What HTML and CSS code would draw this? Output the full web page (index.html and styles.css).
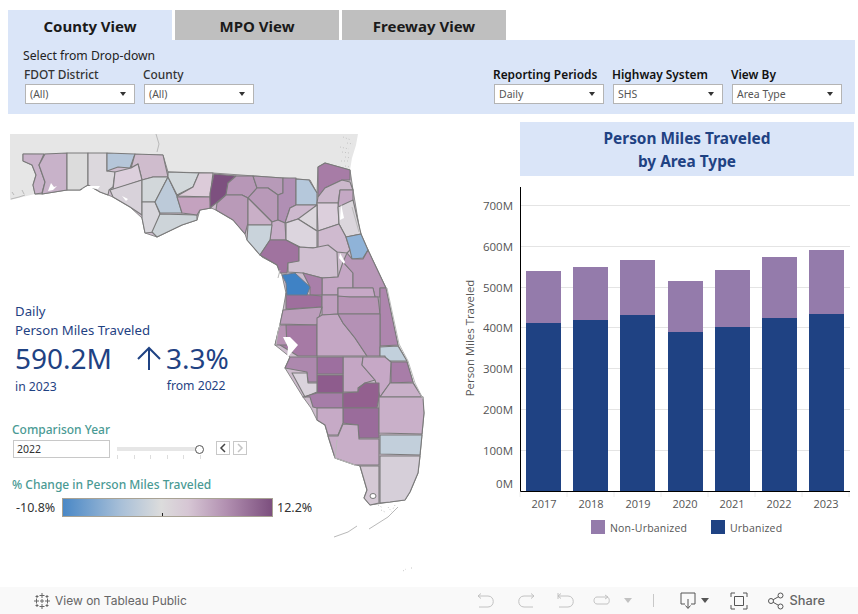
FILE: index.html
```html
<!DOCTYPE html>
<html lang="en">
<head>
<meta charset="utf-8">
<title>Person Miles Traveled</title>
<link rel="stylesheet" href="styles.css">
</head>
<body>
<div class="dashboard">
  <nav class="tabs">
    <a class="tab active">County View</a>
    <a class="tab">MPO View</a>
    <a class="tab">Freeway View</a>
  </nav>
  <section class="filters">
    <div class="filters-left">
      <div class="hint">Select from Drop-down</div>
      <div class="filter-row">
        <div class="filter"><label>FDOT District</label><div class="select"><span>(All)</span><i class="caret"></i></div></div>
        <div class="filter"><label>County</label><div class="select"><span>(All)</span><i class="caret"></i></div></div>
      </div>
    </div>
    <div class="filter-row">
      <div class="filter"><label class="strong">Reporting Periods</label><div class="select"><span>Daily</span><i class="caret"></i></div></div>
      <div class="filter"><label class="strong">Highway System</label><div class="select"><span>SHS</span><i class="caret"></i></div></div>
      <div class="filter"><label class="strong">View By</label><div class="select"><span>Area Type</span><i class="caret"></i></div></div>
    </div>
  </section>
  <main class="content">
    <div class="left">
      <svg class="map" width="500" height="473" viewBox="0 114 500 473">
        <polygon fill="#e6e6e6" points="10,134 358,134 356,145 352,158 350,170 325,163 318,167 317,192 309,180 213,173 168,172 163,155 135,154 23,153 23,161 32,165 36,175 33,185 35,194 10,200"/>
        <path class="speck" d="M156,134l3,10l-2,8M11,199l8,-2l6,-2M12,192l2,3M22,190l2,4"/>
        <path class="noise" d="M343,137l8,3M347,143l6,1M340,147l9,2M342,152l7,1M345,157l6,1M341,161l8,0M345,166l5,1"/>
        <polygon class="state" points="23,154 163,155 168,172 213,173 310,180 317,193 318,167 325,163 350,170 353,190 360,232 368,250 386,288 398,345 407,361 413,382 422,397 424,413 422,434 420,456 418,473 410,492 405,500 390,502 370,505 364,498 367,490 360,466 335,458 328,436 325,425 317,420 311,408 303,397 285,368 290,357 275,345 280,325 283,310 286,293 282,275 277,265 262,257 247,240 245,234 233,220 216,210 211,208 200,210 197,220 182,225 157,237 145,233 142,218 130,207 113,197 108,195 100,192 88,185 80,190 67,190 42,194 35,194 33,185 36,175 32,165 23,161"/>
        <g class="counties">
          <polygon fill="#c9b3ca" points="23,154 44,154 39,165 45,182 42,193 35,194 33,185 36,175 32,165 23,161"/>
          <polygon fill="#c8b2c9" points="45,154 67,153 67,190 42,194 45,182 39,165"/>
          <polygon fill="#dcdcdc" points="67,153 88,153 88,185 80,190 67,190"/>
          <polygon fill="#dcd8dd" points="88,153 107,153 107,171 115,172 113,187 109,190 108,195 100,192 88,185"/>
          <polygon fill="#b5c6d9" points="107,153 135,154 130,168 118,167 107,171"/>
          <polygon fill="#cfbccd" points="135,154 163,155 168,177 153,177 142,180 138,164 131,168"/>
          <polygon fill="#dccfdc" points="115,172 131,168 138,164 142,180 113,190"/>
          <polygon fill="#d8d2da" points="110,190 142,180 142,215 130,207 113,197"/>
          <polygon fill="#d2d7da" points="142,180 153,177 168,177 155,202 142,202"/>
          <polygon fill="#d8d6dc" points="142,202 155,202 160,214 155,232 145,233 142,218"/>
          <polygon fill="#bccad9" points="168,177 177,196 182,213 160,213 155,202"/>
          <polygon fill="#cdd4d9" points="160,214 197,215 197,220 182,225 157,237 152,232"/>
          <polygon fill="#d2d8db" points="168,172 199,173 193,187 177,195 168,177"/>
          <polygon fill="#dccbd9" points="199,173 213,173 210,197 177,196 193,187"/>
          <polygon fill="#c4a2bf" points="177,197 210,197 211,208 200,210 197,215 182,213"/>
          <polygon fill="#7d507f" points="214,174 236,176 228,183 226,195 210,208 210,193"/>
          <polygon fill="#b797b7" points="236,176 253,176 257,188 248,198 242,195 226,195 228,183"/>
          <polygon fill="#b99ab8" points="226,195 242,195 248,198 248,223 245,234 233,220 216,210 217,203"/>
          <polygon fill="#b79ab8" points="253,176 283,178 283,193 278,195 268,188 257,188"/>
          <polygon fill="#b899b8" points="257,188 268,188 278,195 278,220 272,222 255,205 248,198"/>
          <polygon fill="#c9afc7" points="248,198 255,205 272,222 272,225 248,225"/>
          <polygon fill="#b08fb4" points="283,178 296,178 296,205 290,208 285,223 278,220 278,195 283,193"/>
          <polygon fill="#b5c8db" points="296,179 309,180 317,193 317,205 296,205"/>
          <polygon fill="#a77ca6" points="318,167 325,163 350,170 350,180 342,180 325,188 318,197"/>
          <polygon fill="#ccb8cc" points="325,188 342,180 350,182 353,190 340,190 338,203 317,203 318,197"/>
          <polygon fill="#c4a8c4" points="340,190 353,190 353,207 338,207"/>
          <polygon fill="#dccfdc" points="317,203 338,203 339,224 318,231"/>
          <polygon fill="#dbd6dc" points="338,207 353,200 361,234 346,237 339,224"/>
          <polygon fill="#cdb9ce" points="290,208 296,205 317,205 302,219 298,219 285,223"/>
          <polygon fill="#dcd7dd" points="298,219 317,205 317,231"/>
          <polygon fill="#c8aec8" points="278,220 285,223 286,240 270,240 272,222"/>
          <polygon fill="#c9d3db" points="248,225 272,225 270,240 260,255 247,240"/>
          <polygon fill="#dcd5de" points="286,223 298,219 317,231 317,248 300,247 286,240"/>
          <polygon fill="#cfbacf" points="318,231 339,224 346,237 350,250 347,253 337,252 318,248"/>
          <polygon fill="#8fb3d8" points="346,237 361,234 368,250 363,258 352,259 350,250"/>
          <polygon fill="#a0739f" points="270,240 286,240 299,247 299,262 288,263 287,273 280,273 277,265 260,255"/>
          <polygon fill="#d0c0d1" points="299,247 313,248 328,245 337,252 338,277 322,278 303,273 288,272 288,263 299,261"/>
          <polygon fill="#c4a6c4" points="322,278 338,277 343,262 353,273 353,288 338,288 338,295 322,295"/>
          <polygon fill="#b897b8" points="347,253 352,259 363,259 368,250 386,288 380,288 380,297 375,297 373,288 353,288 353,273 343,262"/>
          <polygon fill="#a97fa9" points="303,273 322,278 322,295 310,295 310,287"/>
          <polygon fill="#9f6f9d" points="286,293 310,295 322,296 322,307 286,309"/>
          <polygon fill="#bf9fbf" points="322,295 338,295 338,314 322,315"/>
          <polygon fill="#c6a8c6" points="338,288 373,288 375,297 338,297"/>
          <polygon fill="#b794b6" points="338,296 350,297 378,297 380,314 338,314"/>
          <polygon fill="#ae86ae" points="380,288 386,288 398,345 380,346 380,315"/>
          <polygon fill="#bb9dbb" points="283,310 322,307 317,325 280,324"/>
          <polygon fill="#a67aa5" points="286,325 317,325 317,356 298,356 280,345"/>
          <polygon fill="#b793b4" points="280,325 286,325 287,345 275,345 278,332"/>
          <polygon fill="#c4a7c4" points="317,318 322,315 338,314 343,323 355,338 367,356 317,356"/>
          <polygon fill="#b491b5" points="338,314 380,314 380,356 367,356 355,338 343,323"/>
          <polygon fill="#c2d0dc" points="380,347 398,346 407,361 385,361 385,356 380,356"/>
          <polygon fill="#a87da8" points="391,362 407,362 413,382 391,383"/>
          <polygon fill="#c4a6c4" points="343,357 363,357 362,365 375,380 365,383 358,388 358,392 343,392"/>
          <polygon fill="#c6a8c6" points="363,357 385,357 391,362 390,383 380,397 375,380 362,365"/>
          <polygon fill="#9d6f9f" points="317,357 343,357 343,374 317,374"/>
          <polygon fill="#8e5c8d" points="317,375 343,375 343,393 317,393"/>
          <polygon fill="#ad88ae" points="290,357 317,357 317,382 308,382 307,372 285,368"/>
          <polygon fill="#dad3dc" points="292,373 307,373 308,383 317,383 317,392 305,397"/>
          <polygon fill="#a67da8" points="303,397 317,393 343,393 343,408 317,408 313,407 310,397"/>
          <polygon fill="#93608f" points="343,393 358,392 359,388 365,383 379,383 379,397 377,408 343,408"/>
          <polygon fill="#9a6c9b" points="343,408 377,408 379,408 379,438 359,438 358,425 343,423"/>
          <polygon fill="#c6aac6" points="317,408 343,408 343,423 338,435 328,435 325,425 317,420"/>
          <polygon fill="#c9b0c9" points="390,383 413,383 422,397 380,397"/>
          <polygon fill="#c9b0c9" points="379,397 423,397 424,413 422,434 379,433"/>
          <polygon fill="#c2cfdb" points="380,435 422,435 420,455 380,454"/>
          <polygon fill="#d6cfd9" points="380,456 420,456 418,473 410,492 405,500 390,502 380,503"/>
          <polygon fill="#c8aec8" points="328,436 338,436 343,424 358,425 359,439 379,439 379,465 355,465 335,458"/>
          <polygon fill="#d5c9d5" points="360,466 379,466 379,503 370,505 364,498 367,490"/>
        </g>
        <polygon fill="#3f82c5" stroke="#6d7b8a" stroke-width="1" points="282,275 295,273 310,287 307,295 287,295 286,283"/>
        <g fill="#fff">
          <polygon points="48,191 51,183 54,187 57,186 53,190"/>
          <polygon points="82,189 88,186 100,186 98,189 88,188"/>
          <polygon points="122,196 128,199 126,201"/>
          <polygon points="283,337 290,337 298,345 287,358 288,347"/>
          <polygon points="341,204 344,218 340,220"/>
          <polygon points="340,253 345,262 344,264 339,258"/>
          <polygon points="311,410 315,420 313,426 309,414"/>
        </g>
        <ellipse class="ring" cx="373" cy="496" rx="3" ry="2.500"/>
        <path class="speck" d="M280,325l-2,7l-2,13M280,270l-2,8M352,207l7,25M387,288l12,56l9,17l7,22l8,16M337,440l-2,18l20,7"/>
        <path class="speck" d="M398,507l-10,10l-19,12M334,537l14,-5l9,-6"/>
        <path class="noise" d="M378,505l5,3M388,507l4,5M395,505l-2,4M381,510l4,2M403,571l3,-2M411,568l2,0"/>
      </svg>
      <div class="overlay">
        <div class="kpi-title">Daily</div>
        <div class="kpi-title second">Person Miles Traveled</div>
        <div class="kpi-row">
          <div class="kpi-value">590.2M</div>
          <svg class="kpi-arrow" width="26" height="26" viewBox="0 0 26 26"><path d="M13,25V3M2,14L13,3L24,14"/></svg>
          <div class="kpi-value">3.3%</div>
        </div>
        <div class="kpi-foot"><span>in 2023</span><span class="kpi-from">from 2022</span></div>
        <div class="section-title">Comparison Year</div>
        <div class="year-row">
          <div class="year-box">2022</div>
          <div class="slider">
            <div class="track"><span class="thumb"></span></div>
            <div class="ticks"><i></i><i></i><i></i><i></i><i></i><i></i></div>
          </div>
          <div class="step"><svg width="8" height="10" viewBox="0 0 8 10"><path d="M6,1L2,5L6,9"/></svg></div>
          <div class="step off"><svg width="8" height="10" viewBox="0 0 8 10"><path d="M2,1L6,5L2,9"/></svg></div>
        </div>
        <div class="section-title legend-title">% Change in Person Miles Traveled</div>
        <div class="color-legend">
          <span class="legend-min">-10.8%</span>
          <div class="ramp"><i></i></div>
          <span>12.2%</span>
        </div>
      </div>
    </div>
    <div class="right">
      <h2 class="chart-title">Person Miles Traveled<br>by Area Type</h2>
      <svg class="chart" width="400" height="372" viewBox="458 184 400 372">
        <g class="grid">
          <path d="M520,205.5H850M520,246.5H850M520,287.5H850M520,327.5H850M520,368.5H850M520,409.5H850M520,450.5H850"/>
        </g>
        <g class="ticks-x"><path d="M520,492v5M567,492v5M614,492v5M661,492v5M708,492v5M755,492v5M802,492v5M849,492v5"/></g>
        <g fill="#947bab">
          <rect x="526" y="271" width="35" height="52"/><rect x="573" y="267" width="35" height="53"/><rect x="620" y="260" width="35" height="55"/><rect x="668" y="281" width="35" height="51"/><rect x="715" y="270" width="35" height="57"/><rect x="762" y="257" width="35" height="61"/><rect x="809" y="250" width="35" height="64"/>
        </g>
        <g fill="#1f4283">
          <rect x="526" y="323" width="35" height="168"/><rect x="573" y="320" width="35" height="171"/><rect x="620" y="315" width="35" height="176"/><rect x="668" y="332" width="35" height="159"/><rect x="715" y="327" width="35" height="164"/><rect x="762" y="318" width="35" height="173"/><rect x="809" y="314" width="35" height="177"/>
        </g>
        <path class="axis" d="M520.5,187V491.5H850"/>
        <g class="ylab">
          <text x="513" y="210">700M</text><text x="513" y="251">600M</text><text x="513" y="292">500M</text><text x="513" y="332">400M</text><text x="513" y="373">300M</text><text x="513" y="414">200M</text><text x="513" y="455">100M</text><text x="513" y="488">0M</text>
        </g>
        <g class="xlab">
          <text x="544" y="508">2017</text><text x="591" y="508">2018</text><text x="638" y="508">2019</text><text x="685" y="508">2020</text><text x="732" y="508">2021</text><text x="779" y="508">2022</text><text x="826" y="508">2023</text>
        </g>
        <text class="ytitle" transform="translate(474 338) rotate(-90)">Person Miles Traveled</text>
        <rect x="591" y="520" width="14" height="14" fill="#947bab"/>
        <text class="leg" x="610" y="532">Non-Urbanized</text>
        <rect x="711" y="520" width="14" height="14" fill="#1f4283"/>
        <text class="leg" x="730" y="532">Urbanized</text>
      </svg>
    </div>
  </main>
</div>
<footer class="toolbar">
  <div class="tb-left">
    <svg class="tb-logo" width="18" height="18" viewBox="0 0 18 18"><path d="M9,1v5M6.5,3.5h5M9,12v5M6.5,14.500h5M1,9h5M12,9h5M14.500,6.500v5M3.500,6.500v5M9,7v4M7,9h4M4,3v3M2.500,4.500h3M14,3v3M12.500,4.500h3M4,12v3M2.500,13.500h3M14,12v3M12.500,13.500h3"/></svg>
    <span>View on Tableau Public</span>
  </div>
  <div class="tb-right">
    <svg class="ic dim" width="18" height="16" viewBox="0 0 18 16"><path d="M1,3h10c7,0,7,11,0,11H2M4,0.500L1,3l3,2.500"/></svg>
    <svg class="ic dim" width="18" height="16" viewBox="0 0 18 16"><path d="M17,3H7c-7,0-7,11,0,11h9M14,0.500L17,3l-3,2.500"/></svg>
    <svg class="ic dim mid" width="18" height="16" viewBox="0 0 18 16"><path d="M1,0v6M1,3h10c7,0,7,11,0,11H2M4,0.500L1,3l3,2.500"/></svg>
    <svg class="ic dim last" width="18" height="16" viewBox="0 0 18 16"><path d="M14,4H4C0,4,0,11,4,11h10c3,0,3,-7,0,-7M12,2l3,2l-3,2"/></svg>
    <i class="tb-caret dim-caret"></i>
    <i class="tb-sep"></i>
    <svg class="ic" width="16" height="18" viewBox="0 0 16 18"><path d="M5,12H1V1H15V12H11M8,7V16M5.500,13.500L8,16.500l2.500,-3"/></svg>
    <i class="tb-caret"></i>
    <svg class="ic fs" width="18" height="18" viewBox="0 0 18 18"><path d="M1,5V1H5M13,1h4V5M1,13v4H5M13,17h4V13M4.500,4.500h9v9h-9z"/></svg>
    <div class="share">
      <svg class="ic" width="16" height="18" viewBox="0 0 16 18"><circle cx="3" cy="9" r="2.500"/><circle cx="12.500" cy="3.500" r="2.500"/><circle cx="12.500" cy="14.500" r="2.500"/><path d="M5.200,7.700L10.300,4.800M5.200,10.300L10.300,13.200"/></svg>
      <span>Share</span>
    </div>
  </div>
</footer>
</body>
</html>
```
FILE: styles.css
```css
* { box-sizing: border-box; }
html, body { margin: 0; height: 614px; overflow: hidden; background: #fff; }
body { font-family: "Noto Sans", "Open Sans", sans-serif; display: flex; flex-direction: column; }
.dashboard { height: 587px; padding: 10px 3px 0 8px; }

.tabs { display: flex; gap: 3px; height: 30px; }
.tab { width: 164px; background: #bfbfbf; color: #1a1a1a; font-weight: 700; font-size: 15px; line-height: 33px; text-align: center; }
.tab.active { background: #dae5f8; }

.filters { height: 74px; background: #dae5f8; display: flex; justify-content: space-between; align-items: flex-end; padding: 0 13px 10px 17px; }
.hint { font-size: 12.200px; color: #222; margin: 0 0 3px -2px; line-height: 16px; }
.filter-row { display: flex; gap: 9px; }
.filter { width: 110px; display: flex; flex-direction: column; }
.filter label { font-size: 11.900px; font-weight: 500; color: #333; line-height: 14px; margin: 0 0 3px -1px; white-space: nowrap; }
.filter label.strong { color: #111; font-weight: 600; }
.select { height: 20px; background: #fff; border: 1px solid #b4b4b4; display: flex; align-items: center; justify-content: space-between; padding: 0 8px 0 4px; font-size: 10.500px; color: #555; }
.caret { width: 0; height: 0; border-left: 3.500px solid transparent; border-right: 3.500px solid transparent; border-top: 4px solid #333; }

.content { display: flex; height: 473px; margin-left: -8px; }
.left { width: 520px; display: grid; flex: none; }
.map, .overlay { grid-area: 1 / 1; }
.map { display: block; }
.state { fill: #cdbccd; stroke: #8a8a8a; stroke-width: 1; }
.counties { stroke: #7a7a7a; stroke-width: 1.100; stroke-linejoin: round; }
.speck { fill: none; stroke: #b9b9b9; stroke-width: 1; }
.noise { fill: none; stroke: #c4c4c4; stroke-width: 1; stroke-dasharray: 1 2; }
.ring { fill: #fff; stroke: #777; stroke-width: 1; }

.overlay { padding: 188px 0 0 15px; color: #1f4283; display: flex; flex-direction: column; align-items: flex-start; width: 320px; }
.kpi-title { font-size: 13.200px; line-height: 18px; }
.kpi-title.second { margin-top: 1px; }
.kpi-row { display: flex; align-items: center; height: 38px; }
.kpi-value { font-size: 28px; line-height: 38px; }
.kpi-arrow { margin: 0 4px 0 24px; }
.kpi-arrow path { fill: none; stroke: #1f4283; stroke-width: 2; }
.kpi-foot { display: flex; font-size: 12.200px; line-height: 16px; margin-top: 2px; }
.kpi-from { margin-left: 110px; margin-top: -1px; }

.section-title { font-size: 12px; font-weight: 500; color: #4a9a94; line-height: 16px; margin: 27px 0 0 -3px; }
.legend-title { margin-top: 18px; }
.year-row { display: flex; align-items: flex-start; margin: 2px 0 0 -2px; }
.year-box { width: 97px; height: 18px; border: 1px solid #c8c8c8; background: #fff; font-size: 10.500px; line-height: 16px; padding-left: 3px; color: #333; }
.slider { width: 88px; margin: 7px 0 0 7px; }
.track { position: relative; height: 4px; width: 83px; background: #e6e6e6; }
.thumb { position: absolute; right: -4px; top: -2.500px; width: 9px; height: 9px; border-radius: 50%; background: #fff; border: 1px solid #555; }
.ticks { display: flex; justify-content: space-between; width: 84px; margin-top: 4px; }
.ticks i { width: 1px; height: 4px; background: #ddd; }
.step { width: 14px; height: 14px; border: 1px solid #c8c8c8; display: flex; align-items: center; justify-content: center; margin-top: 1px; }
.slider + .step { margin-left: 11px; margin-right: 3px; }
.step path { fill: none; stroke: #444; stroke-width: 1.500; }
.step.off path { stroke: #c4c4c4; }
.color-legend { display: flex; align-items: center; font-size: 12.500px; color: #333; margin: 5px 0 0 1px; }
.legend-min { width: 46px; }
.ramp { position: relative; width: 211px; height: 19px; margin-right: 4px; border: 1px solid #a8a294; background: linear-gradient(90deg, #4a88c6 0%, #a9c0d8 28%, #dcdcdc 47%, #d6c6d4 60%, #b290b1 78%, #7c4f7e 100%); }
.ramp i { position: absolute; left: 99px; bottom: 0; width: 1px; height: 3px; background: #222; }

.right { flex: none; width: 334px; }
.chart-title { margin: 8px 0 0; height: 54px; background: #dae5f8; color: #1f4283; font-size: 15.400px; font-weight: 700; line-height: 23px; text-align: center; padding-top: 5px; }
.chart { display: block; margin: 8px 0 0 -62px; }
.grid path { fill: none; stroke: #e4e4e4; stroke-width: 1; }
.ticks-x path { fill: none; stroke: #ececec; stroke-width: 1; }
.axis { fill: none; stroke: #000; stroke-width: 1; }
.chart text { font-family: "Open Sans", sans-serif; font-size: 11px; fill: #555; }
.ylab text { text-anchor: end; font-size: 11.500px; }
.xlab text { text-anchor: middle; }
.chart .ytitle { text-anchor: middle; font-size: 11.400px; }
.chart .leg { font-size: 10.500px; letter-spacing: 0.2px; }

.toolbar { height: 27px; background: #f9f9f9; display: flex; justify-content: space-between; align-items: center; font-family: Inter, sans-serif; font-size: 12px; color: #666; padding: 0 33px 0 33px; }
.tb-left { display: flex; align-items: center; gap: 4px; }
.tb-logo path { fill: none; stroke: #666; stroke-width: 1; }
.tb-right { display: flex; align-items: center; }
.ic { fill: none; stroke: #555; stroke-width: 1; }
.ic.dim { stroke: #c2c2c2; margin-right: 22px; }
.ic.dim.mid { margin-right: 18px; }
.ic.dim.last { margin-right: 13px; }
.tb-caret { width: 0; height: 0; border-left: 4px solid transparent; border-right: 4px solid transparent; border-top: 5px solid #555; margin-left: 5px; }
.tb-caret.dim-caret { border-top-color: #c2c2c2; margin-left: 0; }
.tb-sep { width: 1px; height: 13px; background: #c8c8c8; margin: 0 26px 0 21px; }
.fs { margin: 0 20px 0 21px; }
.share { display: flex; align-items: center; gap: 6px; font-weight: 500; font-size: 12.800px; }
```
